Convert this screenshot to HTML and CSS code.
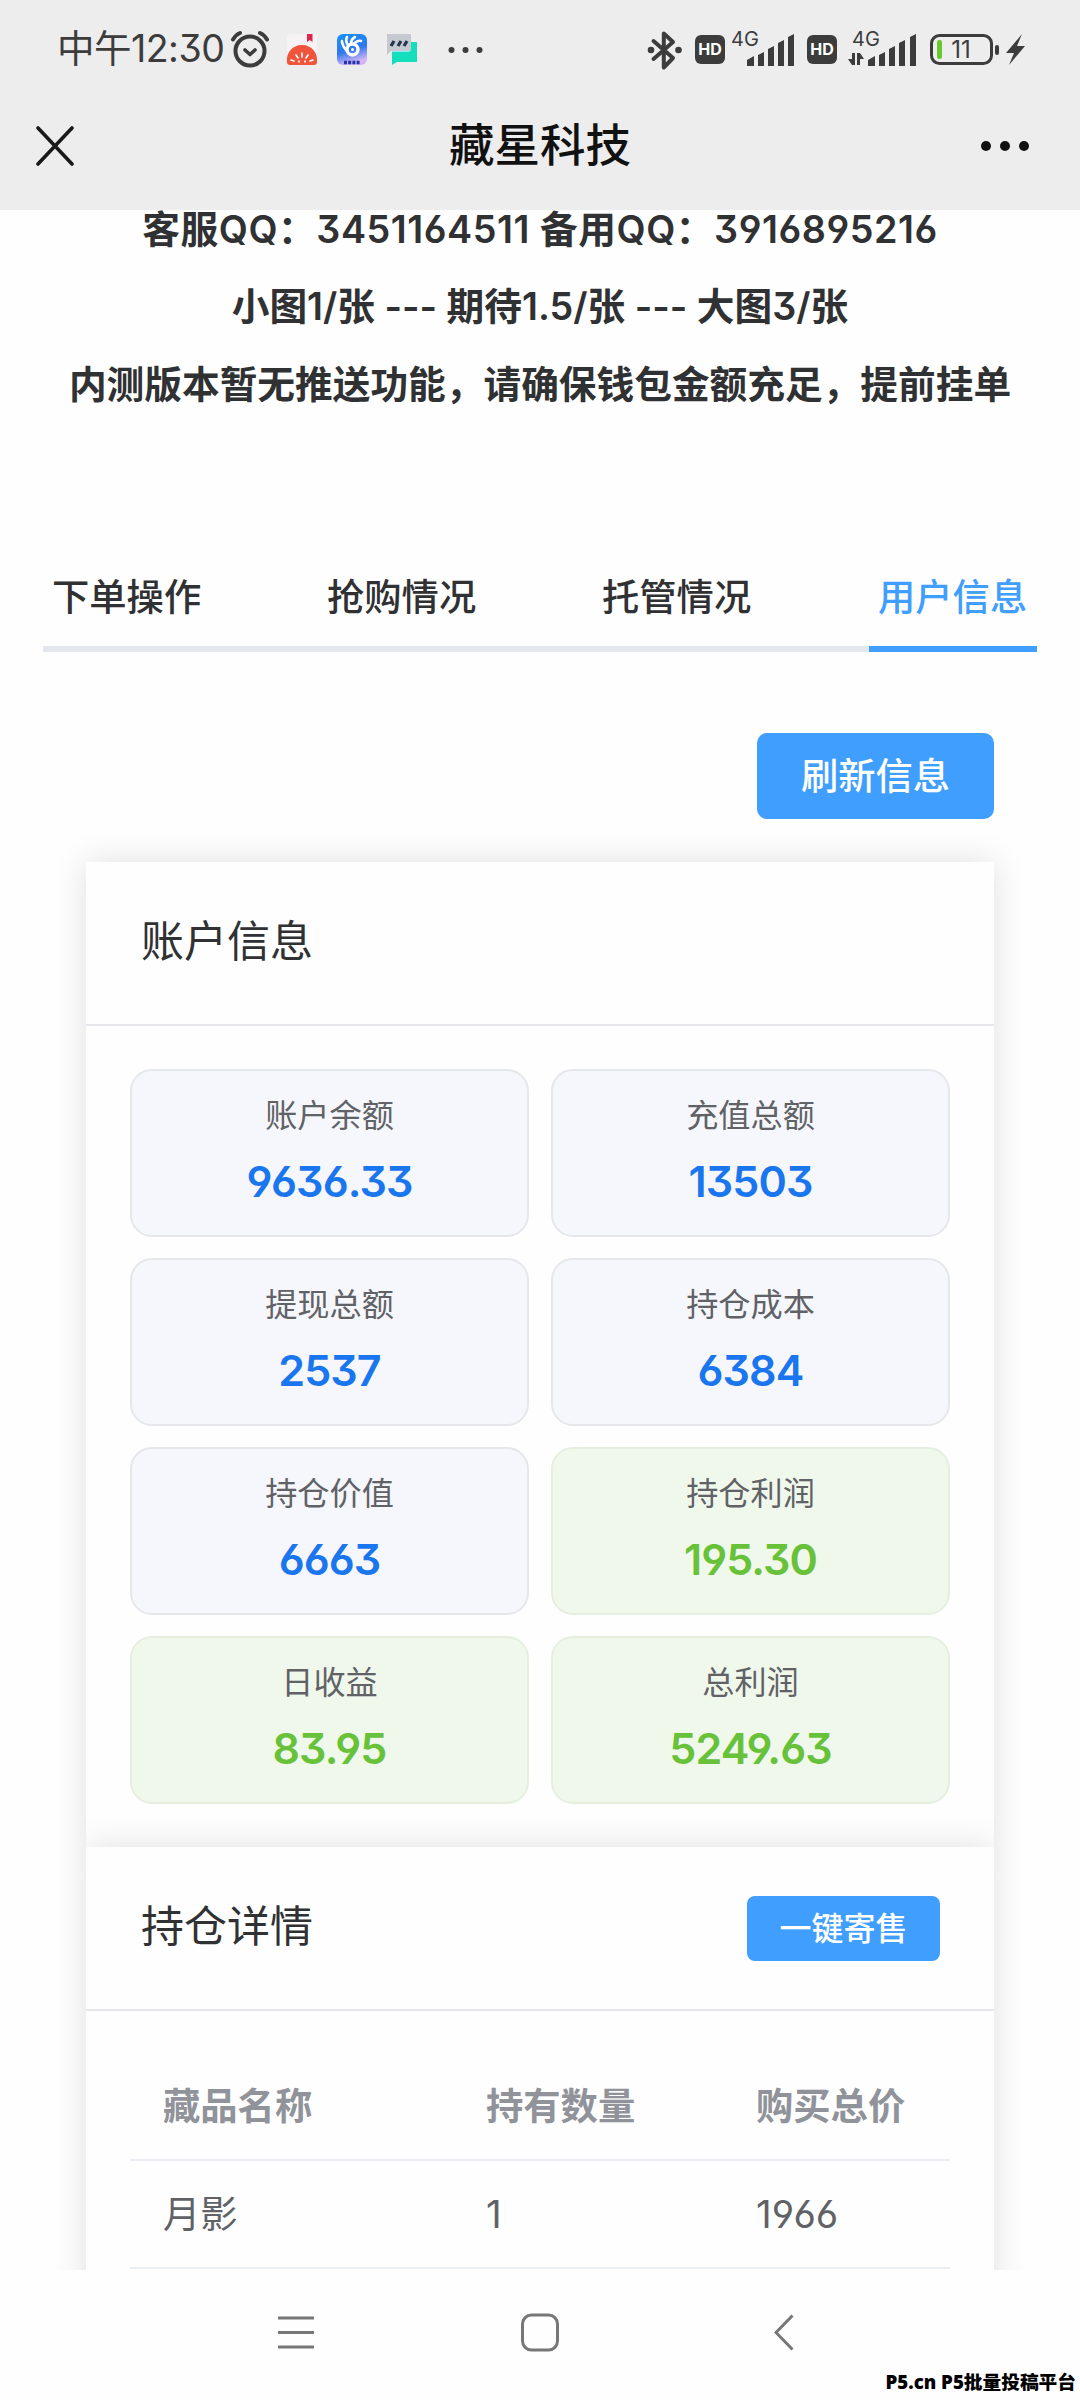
FILE: index.html
```html
<!DOCTYPE html>
<html lang="zh-CN">
<head>
<meta charset="utf-8">
<title>藏星科技</title>
<link rel="stylesheet" href="styles.css">
</head>
<body>
<div class="phone">
  <header class="top">
    <div class="status">
      <span class="clock">中午12:30</span>
      <svg class="status-left" width="260" height="60" viewBox="0 0 260 60">
        <g fill="none" stroke="#3c3c3c" stroke-linecap="round">
          <circle cx="20" cy="32" r="14.5" stroke-width="4"/>
          <path d="M15 31l5 4.500 5-4.500" stroke-width="3.600" stroke-linejoin="round"/>
          <path d="M3 20.500Q6 15.500 10 14M37 20.500Q34 15.500 30 14" stroke-width="4"/>
        </g>
        <rect x="57" y="15" width="30" height="31" rx="4" fill="#f7f3f4"/>
        <path d="M77 15h5.500v8l-2.750-2-2.750 2z" fill="#e0234e"/>
        <path d="M57 43c-1-9 5-17 15-17s16 8 15 17q0 3-3 3H60q-3 0-3-3z" fill="#f0553c"/>
        <path d="M72 34v4M66 36l2 3M78 36l-2 3M61 41l3 1M83 41l-3 1M69 42v1M75 42v1" stroke="#fff" stroke-width="1.600" stroke-linecap="round"/>
        <defs><linearGradient id="sky" x1="0" y1="0" x2=".3" y2="1"><stop offset="0" stop-color="#1592f5"/><stop offset=".6" stop-color="#2f78ee"/><stop offset="1" stop-color="#d3b4f7"/></linearGradient></defs>
        <rect x="107" y="15" width="30" height="31" rx="6" fill="url(#sky)"/>
        <circle cx="122.500" cy="30.500" r="5.500" fill="none" stroke="#fff" stroke-width="3.400"/>
        <path d="M116 31q-4-5-4-9M118 26q-3-4-1-8M121 25q0-5 4-7M124 25q3-4 7-3" fill="none" stroke="#fff" stroke-width="2.600" stroke-linecap="round"/>
        <circle cx="122.500" cy="30.500" r="1.500" fill="#fff"/>
        <path d="M114 43.500h16" stroke="#2733a8" stroke-width="3.500" stroke-dasharray="3 1.200"/>
        <path d="M157 15h24v17h-20l-4 4z" fill="#c6c9cf"/>
        <path d="M164 22l-3 5M171 22l-3 5M177 22l-3 5" stroke="#23374d" stroke-width="3.200"/>
        <path d="M187 23v20h-20l-5 3V33h15q4 0 4-4v-6z" fill="#14dfbd"/>
        <path d="M181 23v6q0 4-4 4h-15v-1h19z" fill="#8be9ef"/>
        <g fill="#3c3c3c"><circle cx="221.500" cy="31" r="3"/><circle cx="235.500" cy="31" r="3"/><circle cx="249.500" cy="31" r="3"/></g>
      </svg>
      <svg class="status-right" width="390" height="60" viewBox="0 0 390 60">
        <path d="M13.500 22L33 39 23.800 48.500V14.500L33 23 13.500 40" fill="none" stroke="#3c3c3c" stroke-width="4" stroke-linejoin="round" stroke-linecap="round"/>
        <g fill="#3c3c3c">
          <circle cx="11" cy="31" r="3.300"/><circle cx="38.500" cy="31" r="3.300"/>
          <rect x="55" y="16" width="30" height="29" rx="6"/>
          <path d="M107 41l7-4v10h-7zM118 36l6-3v14h-6zM128 30l6-3v20h-6zM138 24l6-3v26h-6zM148 18l6-3v32h-6z"/>
          <rect x="167" y="16" width="30" height="29" rx="6"/>
          <path d="M228 41l7-4v10h-7zM239 36l6-3v14h-6zM249 30l6-3v20h-6zM259 24l6-3v26h-6zM270 18l6-3v32h-6z"/>
          <path d="M215 34v12h-3l-4-6h4v-6zM217 46V34h3l4 6h-4v6z"/>
          <rect x="355" y="26" width="4" height="10" rx="2"/>
          <path d="M382 15l-16 19h8l-5 12 16-19h-8z"/>
        </g>
        <rect x="291.500" y="16.500" width="60" height="28" rx="8" fill="none" stroke="#3c3c3c" stroke-width="3"/>
        <rect x="297" y="21" width="5" height="19" rx="2" fill="#68c92e"/>
        <g class="badge"><text x="70" y="36">HD</text><text x="182" y="36">HD</text></g>
        <g class="net"><text x="91" y="27">4G</text><text x="212" y="27">4G</text></g>
        <text class="level" x="321" y="39">11</text>
      </svg>
    </div>
    <div class="titlebar">
      <svg width="38" height="40" viewBox="0 0 38 40"><path d="M2 2l34 36M36 2L2 38" stroke="#191919" stroke-width="3.600" stroke-linecap="round"/></svg>
      <h1>藏星科技</h1>
      <svg width="50" height="12" viewBox="0 0 50 12" fill="#111"><circle cx="6" cy="6" r="5"/><circle cx="25" cy="6" r="5"/><circle cx="44" cy="6" r="5"/></svg>
    </div>
  </header>
  <main class="content">
    <div class="notice">
      <p class="qq">客服QQ：3451164511 备用QQ：3916895216</p>
      <p class="price">小图1/张 --- 期待1.5/张 --- 大图3/张</p>
      <p class="hint">内测版本暂无推送功能，请确保钱包金额充足，提前挂单</p>
    </div>
    <nav class="tabs">
      <span>下单操作</span><span>抢购情况</span><span>托管情况</span><span class="active">用户信息</span>
    </nav>
    <div class="actions"><button class="refresh">刷新信息</button></div>
    <section class="card account">
      <div class="card-head"><h2>账户信息</h2></div>
      <div class="stats">
        <div class="stat"><span>账户余额</span><b>9636.33</b></div>
        <div class="stat"><span>充值总额</span><b>13503</b></div>
        <div class="stat"><span>提现总额</span><b>2537</b></div>
        <div class="stat"><span>持仓成本</span><b>6384</b></div>
        <div class="stat"><span>持仓价值</span><b>6663</b></div>
        <div class="stat gain"><span>持仓利润</span><b>195.30</b></div>
        <div class="stat gain"><span>日收益</span><b>83.95</b></div>
        <div class="stat gain"><span>总利润</span><b>5249.63</b></div>
      </div>
    </section>
    <section class="card holdings">
      <div class="card-head"><h2>持仓详情</h2><button class="sell">一键寄售</button></div>
      <div class="table">
        <div class="row head"><span>藏品名称</span><span>持有数量</span><span>购买总价</span></div>
        <div class="row"><span>月影</span><span class="num">1</span><span class="num">1966</span></div>
      </div>
    </section>
  </main>
  <footer class="navbar">
    <svg width="38" height="40" viewBox="0 0 38 40"><path d="M1 6h36M1 20.500h36M1 35h36" stroke="#777" stroke-width="3"/></svg>
    <svg width="38" height="40" viewBox="0 0 38 40"><rect x="1.500" y="3" width="35" height="35" rx="9" fill="none" stroke="#777" stroke-width="3"/></svg>
    <svg width="20" height="40" viewBox="0 0 20 40"><path d="M18.500 3.500L2 20.500l16.500 17" fill="none" stroke="#777" stroke-width="3"/></svg>
    <span class="watermark">P5.cn P5批量投稿平台</span>
  </footer>
</div>
</body>
</html>
```
FILE: styles.css
```css
* { box-sizing: border-box; margin: 0; padding: 0; }
body {
  font-family: Inter, "Noto Sans CJK SC", sans-serif;
  font-feature-settings: "cv03", "cv04", "cv09";
  background: #fefefe;
  color: #303133;
}
.phone { width: 1080px; height: 2400px; display: flex; flex-direction: column; overflow: hidden; }

.top { height: 210px; flex: none; background: #ededed; }
.status { height: 98px; display: flex; align-items: center; padding: 0 50px 0 57px; }
.clock { width: 173px; font-size: 37.500px; line-height: 60px; letter-spacing: -.5px; color: #3c3c3c; white-space: nowrap; }
.status-left { flex: none; }
.status-right { flex: none; margin: 0 0 0 auto; }
.badge { font: 700 16px Inter, sans-serif; fill: #fff; text-anchor: middle; }
.net { font: 400 20px Inter, sans-serif; fill: #3c3c3c; }
.level { font: 400 24px Inter, sans-serif; fill: #3c3c3c; text-anchor: middle; }
.titlebar { height: 96px; display: grid; grid-template-columns: 50px 1fr 50px; align-items: center; padding: 0 50px 0 36px; }
.titlebar h1 { font-size: 45.500px; font-weight: 500; line-height: 60px; color: #111; text-align: center; padding-left: 14px; }

.content { height: 2060px; flex: none; overflow: hidden; }
.notice { height: 350px; text-align: center; font-size: 37.700px; font-weight: 600; white-space: nowrap; }
.notice p { line-height: 77.800px; }
.notice .qq { line-height: 39px; padding-bottom: 19px; letter-spacing: .550px; }

.tabs { margin: 0 43px; height: 92px; display: grid; grid-template-columns: 275px 275px 276px 168px; border-bottom: 6px solid #e4e7ed; font-size: 37.300px; font-weight: 500; line-height: 75px; }
.tabs span { padding-left: 9px; height: 92px; }
.tabs .active { color: #409eff; border-bottom: 6px solid #409eff; }

.actions { display: flex; justify-content: flex-end; padding: 81px 86px 43px 0; }
button { border: 0; background: #409eff; color: #fff; font-family: inherit; font-weight: 500; }
.refresh { width: 237px; height: 86px; border-radius: 10px; font-size: 37.300px; padding-bottom: 5px; }

.card { margin: 0 86px; background: #fefefe; box-shadow: 0 0 33px rgba(0, 0, 0, .12); position: relative; }
.card-head { height: 164px; border-bottom: 2px solid #e4e6ea; padding: 0 54px 0 55px; display: flex; align-items: center; justify-content: space-between; }
.card-head h2 { font-size: 43px; font-weight: 400; line-height: 60px; padding-bottom: 4px; }
.account { height: 985px; }
.stats { padding: 43px 44px; display: grid; grid-template-columns: 1fr 1fr; gap: 21px 22px; }
.stat { height: 168px; border: 2px solid #e6e7ea; border-radius: 22px; background: #f6f7fc; display: flex; flex-direction: column; align-items: center; padding-top: 22px; }
.stat span { font-size: 32.200px; line-height: 46px; color: #606266; }
.stat b { font-size: 43px; font-weight: 600; line-height: 60px; margin-top: 12px; letter-spacing: -.9px; color: #1a76ee; }
.gain { background: #f0f8ec; border-color: #e4efe0; }
.stat.gain b { color: #67c23a; }

.holdings { height: 600px; }
.sell { width: 193px; height: 65px; border-radius: 8px; font-size: 32px; padding-bottom: 4px; }
.table { padding: 42px 44px; }
.row { height: 108px; display: grid; grid-template-columns: 323px 270px 1fr; align-items: center; padding: 0 0 5px 33px; border-bottom: 2px solid #ebeef2; font-size: 37.300px; color: #606266; }
.row .num { font-size: 38.500px; padding-top: 4px; }
.head { font-weight: 600; color: #909399; }

.navbar { height: 130px; position: relative; background: #fefefe; display: grid; grid-template-columns: 244px 253px 20px; align-items: start; padding: 42px 0 0 277px; }
.watermark { position: absolute; right: 4px; bottom: 4px; font-family: "Open Sans", "Noto Sans CJK SC", sans-serif; font-size: 18.700px; font-weight: 900; line-height: 28px; color: #000; white-space: nowrap; }
```
